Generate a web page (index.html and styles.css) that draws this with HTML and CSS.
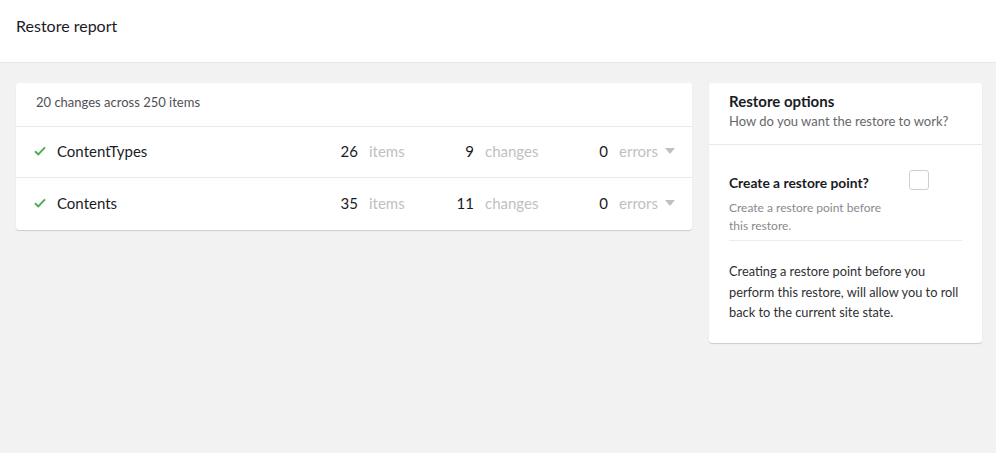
FILE: index.html
```html
<!DOCTYPE html>
<html>
<head>
<meta charset="utf-8">
<link rel="stylesheet" href="styles.css">
</head>
<body>
<div class="page">
  <header class="topbar"><h1 class="title">Restore report</h1></header>
  <main class="content">
    <section class="card report">
      <div class="report-head">20 changes across 250 items</div>
      <div class="row">
        <svg class="check" viewBox="0 0 12 10" width="12" height="10"><path d="M1 5.2 L4.3 8.4 L11 1.4" fill="none" stroke="#4aaa52" stroke-width="1.9"/></svg>
        <span class="name">ContentTypes</span>
        <span class="stat s-items"><span class="num">26</span><span class="lbl">items</span></span>
        <span class="stat s-changes"><span class="num">9</span><span class="lbl">changes</span></span>
        <span class="stat s-errors"><span class="num">0</span><span class="lbl">errors</span><span class="caret"></span></span>
      </div>
      <div class="row">
        <svg class="check" viewBox="0 0 12 10" width="12" height="10"><path d="M1 5.2 L4.3 8.4 L11 1.4" fill="none" stroke="#4aaa52" stroke-width="1.9"/></svg>
        <span class="name">Contents</span>
        <span class="stat s-items"><span class="num">35</span><span class="lbl">items</span></span>
        <span class="stat s-changes"><span class="num">11</span><span class="lbl">changes</span></span>
        <span class="stat s-errors"><span class="num">0</span><span class="lbl">errors</span><span class="caret"></span></span>
      </div>
    </section>
    <aside class="card options">
      <div class="opt-head">
        <div class="opt-title">Restore options</div>
        <div class="opt-sub">How do you want the restore to work?</div>
      </div>
      <div class="opt-body">
        <div class="prop">
          <div class="prop-label">
            <div class="prop-name">Create a restore point?</div>
            <div class="prop-desc">Create a restore point before this restore.</div>
          </div>
          <span class="checkbox"></span>
        </div>
        <p class="opt-text">Creating a restore point before you perform this restore, will allow you to roll back to the current site state.</p>
      </div>
    </aside>
  </main>
</div>
</body>
</html>
```
FILE: styles.css
```css
html, body {
  margin: 0;
  padding: 0;
}
body {
  font-family: Lato, "Open Sans", sans-serif;
  background: #f3f2f3;
  color: #1b1b1f;
  width: 996px;
  height: 453px;
  overflow: hidden;
}
.topbar {
  background: #fff;
  height: 63px;
  border-bottom: 1px solid #e7e6e8;
  display: flex;
  align-items: center;
  padding: 0 16px;
  box-sizing: border-box;
}
.title {
  margin: 0;
  font-size: 16px;
  font-weight: 400;
  color: #1b1b1f;
  position: relative;
  top: -6px;
}
.content {
  display: flex;
  align-items: flex-start;
  gap: 17px;
  padding: 20px 14px 0 16px;
}
.card {
  background: #fff;
  border-radius: 3px;
  box-shadow: 0 1px 1px rgba(0, 0, 0, 0.16);
}
.report {
  width: 676px;
  flex: none;
}
.report-head {
  height: 44px;
  box-sizing: border-box;
  padding: 11px 20px 0;
  font-size: 13px;
  color: #515054;
  border-bottom: 1px solid #e9e9eb;
}
.row {
  display: flex;
  align-items: center;
  height: 51px;
  padding: 0 17px 3px 18px;
  border-bottom: 1px solid #e9e9eb;
  box-sizing: border-box;
  font-size: 15px;
}
.row:last-child {
  border-bottom: 0;
  height: 52px;
}
.check {
  flex: none;
  margin-right: 11px;
}
.name {
  flex: 1;
  color: #1b1b1f;
}
.stat {
  display: flex;
  align-items: center;
}
.num {
  width: 40px;
  text-align: right;
  color: #1b1b1f;
}
.lbl {
  margin-left: 11px;
  color: #c0bfc3;
}
.s-items .lbl { width: 65px; }
.s-changes .lbl { width: 83px; }
.s-errors .lbl { width: 46px; }
.caret {
  width: 0;
  height: 0;
  border-left: 5.5px solid transparent;
  border-right: 5.5px solid transparent;
  border-top: 6px solid #c0bfc3;
}
.options {
  width: 273px;
  flex: none;
}
.opt-head {
  padding: 8px 20px 13px;
  border-bottom: 1px solid #e9e9eb;
}
.opt-title {
  font-size: 15px;
  line-height: 20px;
  font-weight: 700;
  color: #1b1b1f;
}
.opt-sub {
  font-size: 13px;
  line-height: 20px;
  color: #68676b;
}
.opt-body {
  padding: 25px 20px 20px;
}
.prop {
  display: flex;
  align-items: flex-start;
  padding-bottom: 5px;
  border-bottom: 1px solid #ececee;
}
.prop-label {
  width: 180px;
  padding-top: 3px;
}
.prop-name {
  font-size: 13.8px;
  font-weight: 700;
  line-height: 20px;
  color: #1b1b1f;
}
.prop-desc {
  width: 165px;
  margin-top: 6px;
  font-size: 12px;
  line-height: 18px;
  color: #8a898d;
}
.checkbox {
  width: 20px;
  height: 20px;
  box-sizing: border-box;
  border: 1px solid #cfced2;
  border-radius: 3px;
  background: #fff;
}
.opt-text {
  margin: 20px 0 0;
  font-size: 12.8px;
  line-height: 20.5px;
  color: #303033;
}
```
